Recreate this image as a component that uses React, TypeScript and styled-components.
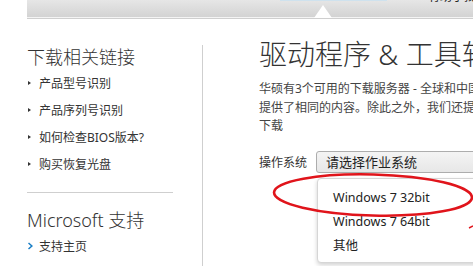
import * as React from 'react';
import styled, { createGlobalStyle } from 'styled-components';

const GlobalStyle = createGlobalStyle`
  html, body {
    margin: 0;
    padding: 0;
    background: #fff;
  }
  body {
    font-family: "Noto Sans", "Noto Sans CJK SC", sans-serif;
    color: #333;
  }
`;

const sideLinks = ['产品型号识别', '产品序列号识别', '如何检查BIOS版本?', '购买恢复光盘'];
const msLinks = ['支持主页', '常见问题'];
const osOptions = ['Windows 7 32bit', 'Windows 7 64bit', '其他'];

const App = () => {
  return (
    <Page>
      <GlobalStyle />
      <TopBar>
        <TabHint />
        <TopText>有助于找到您</TopText>
        <Notch />
      </TopBar>
      <Main>
        <Sidebar>
          <SideTitle>下载相关链接</SideTitle>
          <SideList>
            {sideLinks.map((t) => (
              <SideItem key={t}>
                <Bullet />
                {t}
              </SideItem>
            ))}
          </SideList>
          <Divider />
          <SideTitle $spaced>Microsoft 支持</SideTitle>
          <SideList>
            {msLinks.map((t) => (
              <SideItem key={t}>
                <Chevron viewBox="0 0 6 8">
                  <path d="M1 0.5 L5 4 L1 7.5 L0 6.5 L2.8 4 L0 1.5 Z" fill="#1a7fc6" />
                </Chevron>
                {t}
              </SideItem>
            ))}
          </SideList>
        </Sidebar>
        <Content>
          <Title>驱动程序 &amp; 工具软件</Title>
          <Intro>
            华硕有3个可用的下载服务器 - 全球和中国，每个服务器都
            <br />
            提供了相同的内容。除此之外，我们还提供了其他的
            <br />
            下载
          </Intro>
          <OsRow>
            <OsLabel>操作系统</OsLabel>
            <Select>请选择作业系统</Select>
          </OsRow>
        </Content>
      </Main>
      <Menu>
        {osOptions.map((o) => (
          <MenuItem key={o}>{o}</MenuItem>
        ))}
      </Menu>
      <Marks viewBox="0 0 473 266">
        <ellipse
          cx="373"
          cy="195"
          rx="99"
          ry="20.5"
          fill="none"
          stroke="#e0141b"
          strokeWidth="2.6"
          transform="rotate(1.5 373 195)"
        />
        <path d="M469 228 L473 226" stroke="#e0141b" strokeWidth="1.4" />
      </Marks>
    </Page>
  );
};

const Page = styled.div`
  position: relative;
  width: 473px;
  height: 266px;
  overflow: hidden;
  background: #fff;
`;
const TopBar = styled.div`
  position: relative;
  margin-left: 27px;
  height: 17px;
  background: linear-gradient(#e6e6e6, #d3d3d3);
  border-bottom: 1px solid #f4f4f4;
  box-shadow: 0 1px 0 #cfcfcf;
`;
const TabHint = styled.div`
  position: absolute;
  left: 253px;
  top: 0;
  width: 107px;
  height: 1px;
  background: #cfe2ee;
`;
const TopText = styled.div`
  position: absolute;
  left: 401px;
  top: -11px;
  font-size: 12px;
  line-height: 16px;
  white-space: nowrap;
  color: #222;
`;
const Notch = styled.div`
  position: absolute;
  left: 287px;
  bottom: -1px;
  width: 0;
  height: 0;
  border-left: 9px solid transparent;
  border-right: 9px solid transparent;
  border-bottom: 13px solid #fff;
`;
const Main = styled.div`
  display: flex;
  padding-left: 27px;
  margin-top: 1px;
`;
const Sidebar = styled.div`
  flex: 0 0 176px;
  margin-top: 26px;
  height: 240px;
  border-right: 1px solid #cfcfcf;
  box-sizing: border-box;
`;
const SideTitle = styled.div<{ $spaced?: boolean }>`
  font-size: 18px;
  line-height: 24px;
  font-weight: 300;
  color: #333;
  margin-top: ${({ $spaced }) => ($spaced ? '15px' : '0')};
`;
const SideList = styled.ul`
  list-style: none;
  margin: 0;
  padding: 0;
`;
const SideItem = styled.li`
  display: flex;
  align-items: center;
  height: 27px;
  font-size: 12px;
  color: #333;
  white-space: nowrap;
`;
const Bullet = styled.span`
  width: 0;
  height: 0;
  margin: 0 8px 0 1px;
  border-top: 2.5px solid transparent;
  border-bottom: 2.5px solid transparent;
  border-left: 3px solid #333;
`;
const Chevron = styled.svg`
  width: 6px;
  height: 8px;
  margin: 0 5px 0 1px;
`;
const Divider = styled.div`
  width: 146px;
  height: 1px;
  background: #cfcfcf;
  margin-top: 15px;
`;
const Content = styled.div`
  flex: 1;
  min-width: 0;
  padding-left: 56px;
  padding-top: 18px;
  white-space: nowrap;
`;
const Title = styled.h1`
  margin: 0 0 9px;
  font-size: 28px;
  line-height: 34px;
  font-weight: 300;
  color: #333;
`;
const Intro = styled.p`
  margin: 0;
  font-size: 12px;
  line-height: 18.5px;
  color: #444;
`;
const OsRow = styled.div`
  display: flex;
  align-items: center;
  margin-top: 15px;
`;
const OsLabel = styled.span`
  flex: 0 0 57px;
  font-size: 12px;
  color: #333;
`;
const Select = styled.div`
  flex: 0 0 200px;
  height: 22px;
  box-sizing: border-box;
  padding-left: 9px;
  border: 1px solid #adadad;
  border-radius: 3px;
  background: linear-gradient(#f4f4f4, #e7e7e7);
  font-size: 13px;
  line-height: 20px;
  color: #222;
`;
const Menu = styled.ul`
  position: absolute;
  left: 317px;
  top: 178px;
  width: 200px;
  height: 85px;
  box-sizing: border-box;
  margin: 0;
  padding: 7px 0 0;
  list-style: none;
  background: #fff;
  border: 1px solid #d6d6d6;
  border-radius: 4px;
  box-shadow: 0 2px 4px rgba(0, 0, 0, 0.18);
`;
const MenuItem = styled.li`
  height: 24px;
  line-height: 24px;
  padding-left: 15px;
  font-size: 12.5px;
  color: #222;
  white-space: nowrap;
`;
const Marks = styled.svg`
  position: absolute;
  left: 0;
  top: 0;
  width: 473px;
  height: 266px;
  pointer-events: none;
`;

export default App;
